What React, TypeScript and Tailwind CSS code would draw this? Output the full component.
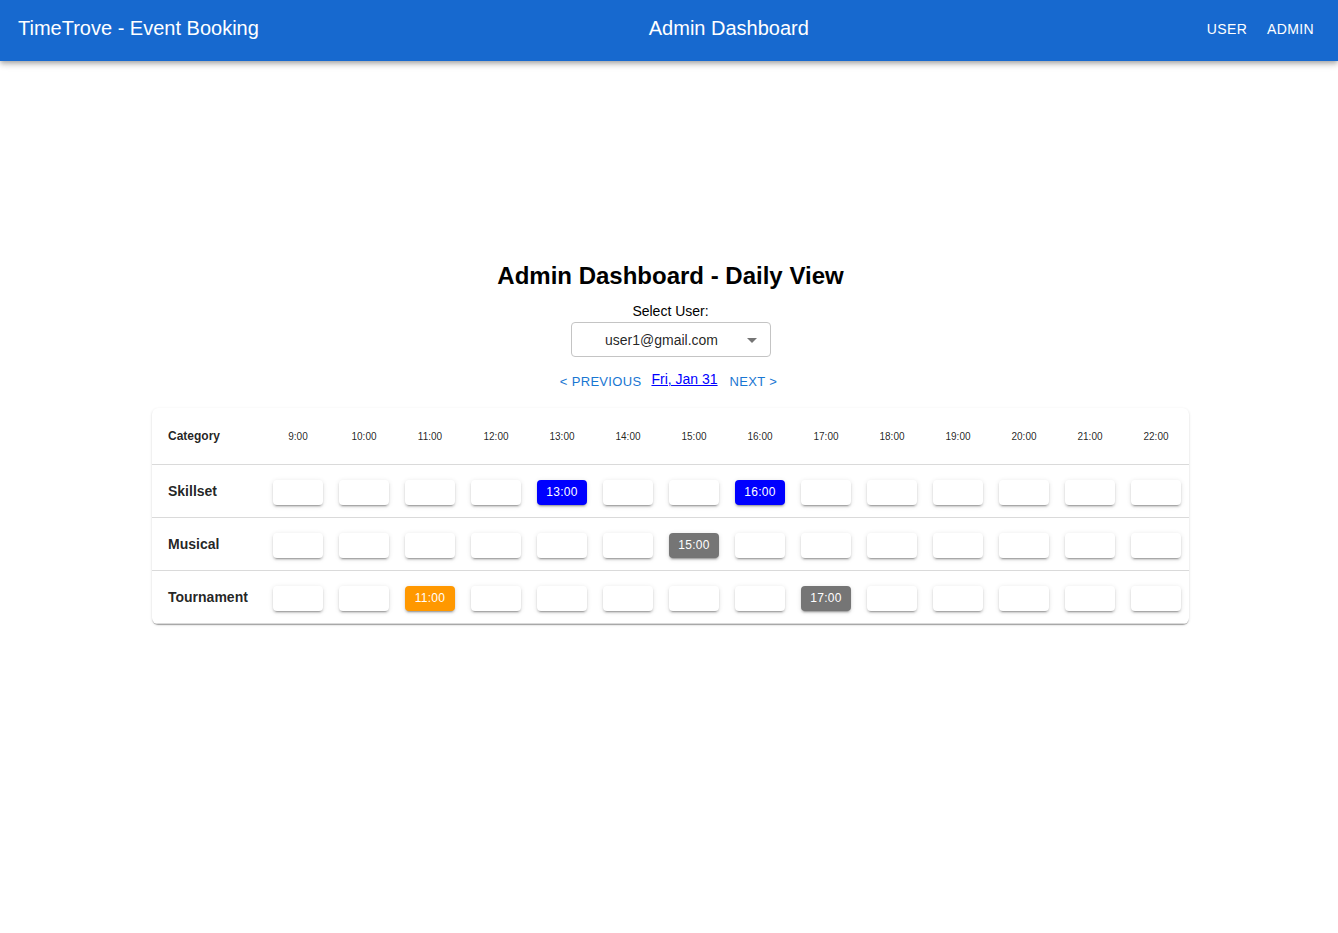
import { useState } from "react";

const HOURS = [9, 10, 11, 12, 13, 14, 15, 16, 17, 18, 19, 20, 21, 22];

type Row = { name: string; booked: Record<number, string> };

const ROWS: Row[] = [
  { name: "Skillset", booked: { 13: "bg-[#0000ff]", 16: "bg-[#0000ff]" } },
  { name: "Musical", booked: { 15: "bg-[#757575]" } },
  { name: "Tournament", booked: { 11: "bg-[#ff9800]", 17: "bg-[#757575]" } },
];

const CELL_SHADOW =
  "shadow-[0px_3px_1px_-2px_rgba(0,0,0,0.2),0px_2px_2px_0px_rgba(0,0,0,0.14),0px_1px_5px_0px_rgba(0,0,0,0.12)]";

function Header() {
  return (
    <header className="flex h-[61px] items-center justify-between bg-[#1769cf] pr-4 pb-1.5 pl-[18px] text-white shadow-[0px_2px_4px_-1px_rgba(0,0,0,0.2),0px_4px_5px_0px_rgba(0,0,0,0.14),0px_1px_10px_0px_rgba(0,0,0,0.12)]">
      <div className="text-xl">TimeTrove - Event Booking</div>
      <h1 className="text-xl">Admin Dashboard</h1>
      <nav className="flex gap-1 pt-0.5 text-sm tracking-wide">
        <a href="#user" className="px-2">USER</a>
        <a href="#admin" className="px-2">ADMIN</a>
      </nav>
    </header>
  );
}

function UserSelect() {
  const [user, setUser] = useState("user1@gmail.com");
  return (
    <div className="flex flex-col items-center">
      <label htmlFor="user" className="pt-px pb-px text-sm text-black">Select User:</label>
      <div className="grid w-[200px] items-center">
        <select
          id="user"
          value={user}
          onChange={(e) => setUser(e.target.value)}
          className="col-start-1 row-start-1 h-[35px] w-full appearance-none rounded border border-[#c4c4c4] bg-white pr-8 pl-3.5 text-center text-sm text-black/87"
        >
          <option>user1@gmail.com</option>
        </select>
        <svg viewBox="0 0 24 24" className="pointer-events-none col-start-1 row-start-1 mr-[7px] size-6 justify-self-end fill-black/54">
          <path d="M7 10l5 5 5-5z" />
        </svg>
      </div>
    </div>
  );
}

function Schedule() {
  return (
    <div className="overflow-hidden rounded-md bg-white shadow-[0px_2px_1px_-1px_rgba(0,0,0,0.2),0px_1px_1px_0px_rgba(0,0,0,0.14),0px_1px_3px_0px_rgba(0,0,0,0.12)]">
      <table className="border-separate border-spacing-0 text-black/87">
        <thead>
          <tr>
            <th scope="col" className="h-[57px] w-[113px] border-b border-[#dadada] pl-4 text-left text-xs font-bold">Category</th>
            {HOURS.map((h) => (
              <th key={h} scope="col" className="w-[66px] border-b border-[#dadada] pt-0.5 text-center text-[10px] font-normal">{h}:00</th>
            ))}
          </tr>
        </thead>
        <tbody>
          {ROWS.map((row) => (
            <tr key={row.name}>
              <th scope="row" className="h-[53px] border-b border-[#dadada] pl-4 text-left text-sm font-bold">{row.name}</th>
              {HOURS.map((h) => (
                <td key={h} className="border-b border-[#dadada] px-2 pt-[3px]">
                  <button
                    type="button"
                    aria-label={`${row.name} ${h}:00`}
                    className={`block h-[25px] w-[50px] rounded text-xs tracking-wide text-white ${CELL_SHADOW} ${row.booked[h] ?? "bg-white"}`}
                  >
                    {row.booked[h] ? `${h}:00` : ""}
                  </button>
                </td>
              ))}
            </tr>
          ))}
        </tbody>
      </table>
    </div>
  );
}

export default function App() {
  return (
    <div className="min-h-screen bg-white font-['Liberation_Sans',Arial,sans-serif]">
      <Header />
      <main className="flex flex-col items-center pt-[199px] pl-[3px]">
        <h2 className="mb-2 text-2xl font-bold text-black">Admin Dashboard - Daily View</h2>
        <UserSelect />
        <div className="mt-3 mr-1 mb-4 flex items-start gap-2.5 text-[#1976d2]">
          <button type="button" className="pt-[3px] text-[13px] tracking-wide">&lt; PREVIOUS</button>
          <a href="#date" className="text-sm text-[#0000ff] underline">Fri, Jan 31</a>
          <button type="button" className="pt-[3px] pl-0.5 text-[13px] tracking-wide">NEXT &gt;</button>
        </div>
        <Schedule />
      </main>
    </div>
  );
}
